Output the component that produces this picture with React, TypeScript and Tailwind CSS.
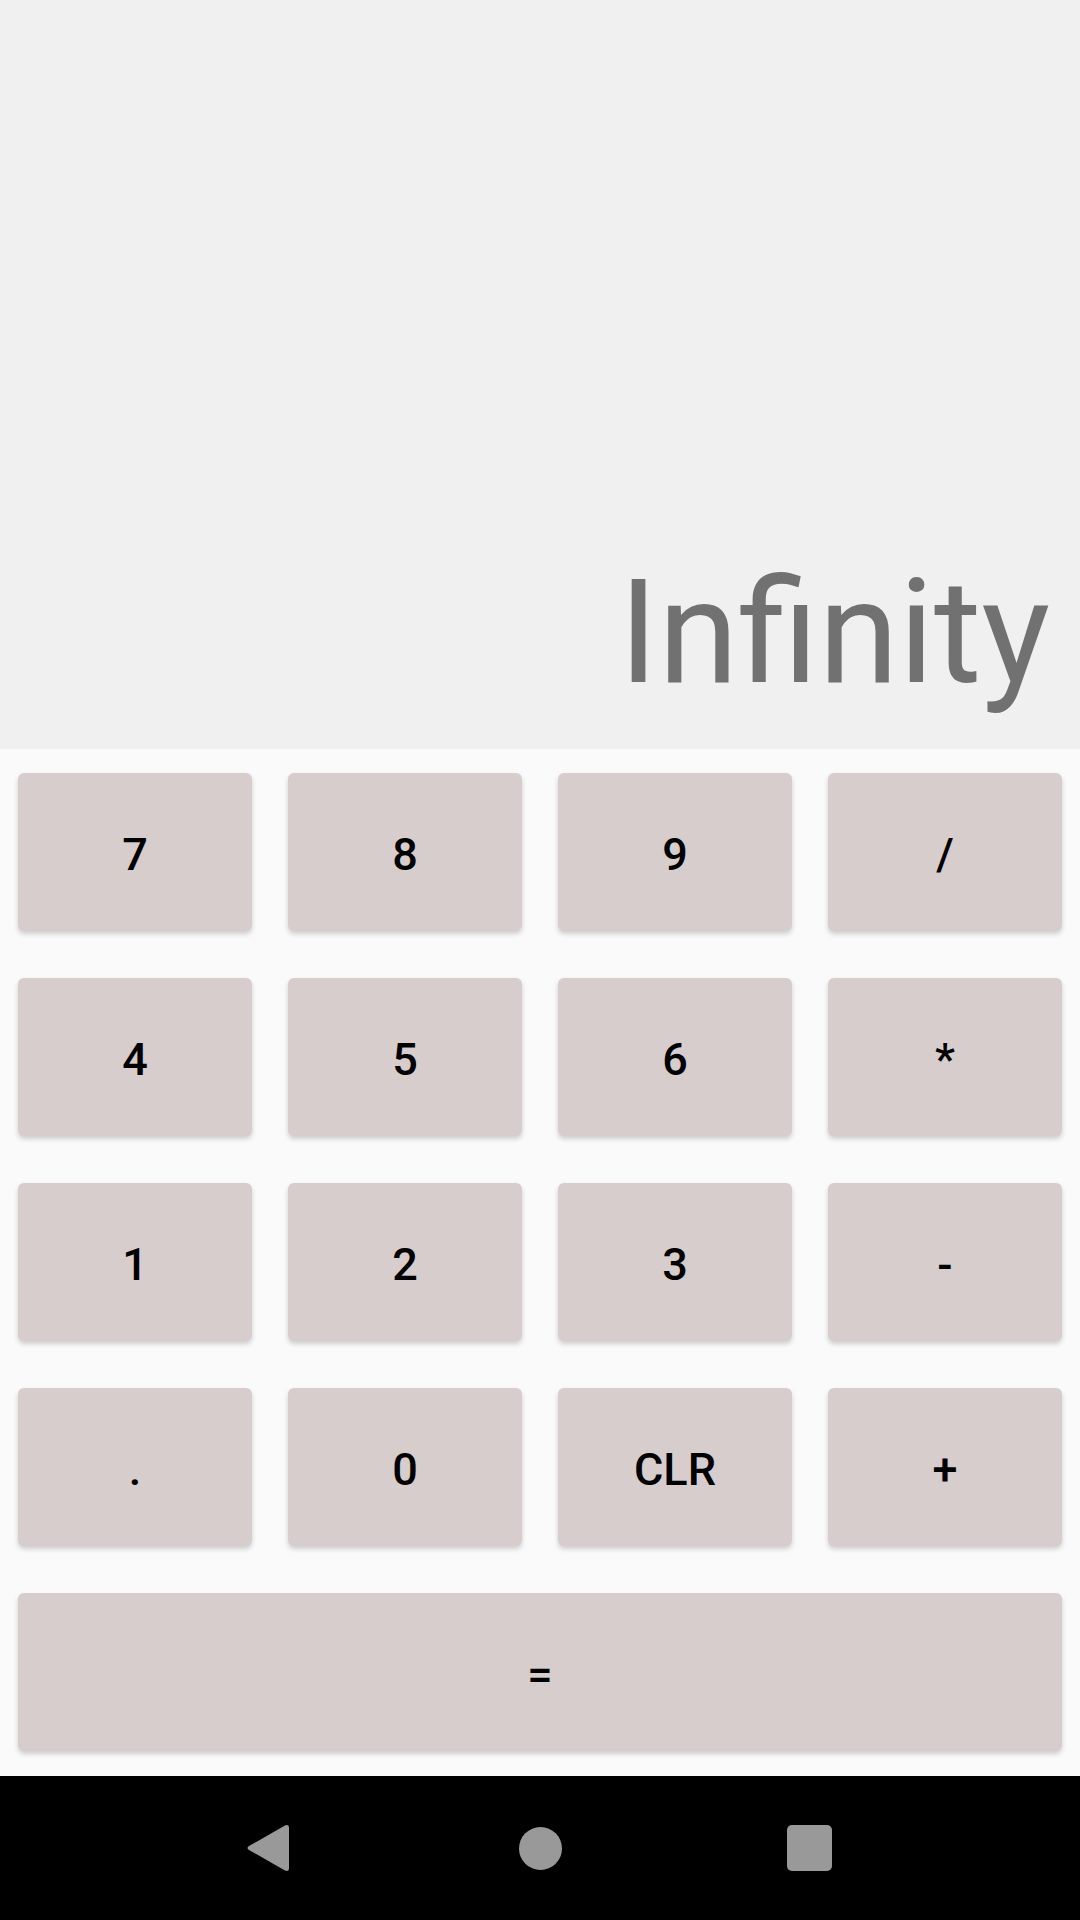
const keys = ['7', '8', '9', '/', '4', '5', '6', '*', '1', '2', '3', '-', '.', '0', 'CLR', '+'];

const KeyButton: React.FC<{ label: string; wide?: boolean }> = ({ label, wide }) => (
  <button
    className={`${wide ? 'col-span-4' : ''} h-[158px] pt-[4px] rounded-[6px] bg-[#d6cdcc] text-black text-[45px] font-medium leading-none shadow-[0_3px_5px_rgba(0,0,0,0.18)] flex items-center justify-center`}
    style={{ fontFamily: 'Roboto, "Liberation Sans", sans-serif' }}
  >
    {label}
  </button>
);

const App: React.FC = () => {
  return (
    <div className="w-[1080px] h-[1920px] flex flex-col overflow-hidden">
      <div className="h-[749px] shrink-0 bg-[#f0f0f0] flex items-end justify-end pr-[30px] pb-[44px]">
        <span
          className="text-[145px] leading-none text-[#717171]"
          style={{ fontFamily: 'Roboto, "Noto Sans", sans-serif' }}
        >
          Infinity
        </span>
      </div>

      <div className="flex-1 bg-[#fafafa] px-[18px] pt-[24px] pb-[25px]">
        <div className="grid grid-cols-4 gap-x-[36px] gap-y-[47px]">
          {keys.map((k) => (
            <KeyButton key={k} label={k} />
          ))}
          <KeyButton label="=" wide />
        </div>
      </div>

      <div className="h-[144px] shrink-0 bg-black flex items-center justify-center">
        <div className="w-[272px] flex justify-center">
          <svg width="44" height="48" viewBox="0 0 44 48">
            <path
              d="M3 22 L39 1.5 Q43 0 43 4 L43 44 Q43 48 39 46.5 L3 26 Q0 24 3 22 Z"
              fill="#999999"
            />
          </svg>
        </div>
        <div className="w-[272px] flex justify-center">
          <div className="w-[43px] h-[43px] rounded-full bg-[#999999]" />
        </div>
        <div className="w-[272px] flex justify-center">
          <div className="w-[45px] h-[46px] mr-[6px] rounded-[5px] bg-[#999999]" />
        </div>
      </div>
    </div>
  );
};

export default App;
